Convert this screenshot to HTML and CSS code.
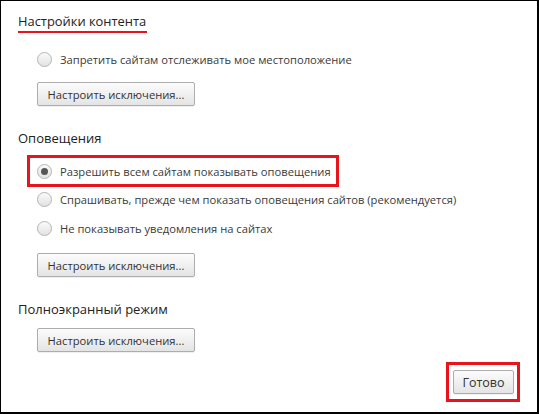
FILE: index.html
```html
<!DOCTYPE html>
<html lang="ru">
<head>
<meta charset="utf-8">
<link rel="stylesheet" href="styles.css">
</head>
<body>
<div class="frame">
  <div class="page-title"><span class="underlined">Настройки контента</span></div>

  <div class="group first">
    <label class="radio-row"><span class="radio"></span><span class="label">Запретить сайтам отслеживать мое местоположение</span></label>
    <button class="btn">Настроить исключения...</button>
  </div>

  <div class="section">
    <div class="section-title">Оповещения</div>
    <div class="group">
      <div class="highlight"><label class="radio-row"><span class="radio checked"></span><span class="label">Разрешить всем сайтам показывать оповещения</span></label></div>
      <label class="radio-row"><span class="radio"></span><span class="label">Спрашивать, прежде чем показать оповещения сайтов (рекомендуется)</span></label>
      <label class="radio-row"><span class="radio"></span><span class="label">Не показывать уведомления на сайтах</span></label>
      <button class="btn after-list">Настроить исключения...</button>
    </div>
  </div>

  <div class="section">
    <div class="section-title">Полноэкранный режим</div>
    <div class="group">
      <button class="btn after-title">Настроить исключения...</button>
    </div>
  </div>

  <div class="footer">
    <div class="highlight-btn"><button class="btn done">Готово</button></div>
  </div>
</div>
</body>
</html>
```
FILE: styles.css
```css
html, body {
  margin: 0;
  padding: 0;
  background: #fff;
}
body {
  width: 539px;
  height: 414px;
  box-sizing: border-box;
  border-top: 1px solid #000;
  border-left: 1px solid #000;
  border-right: 2px solid #000;
  border-bottom: 2px solid #000;
  font-family: "Open Sans", "Noto Sans", sans-serif;
  color: #333;
  overflow: hidden;
}
.frame {
  display: flex;
  flex-direction: column;
  height: 100%;
  padding: 0 0 0 17px;
  box-sizing: border-box;
}
.page-title {
  margin-top: 11px;
  height: 21px;
  font-size: 12.9px;
  color: #222;
}
.underlined {
  display: inline-block;
  border-bottom: 2px solid #e8131b;
  padding: 0 1px 0 0;
  line-height: 19px;
}
.group {
  display: flex;
  flex-direction: column;
  align-items: flex-start;
  padding-left: 19px;
}
.group.first {
  margin-top: 12px;
}
.radio-row {
  display: flex;
  align-items: center;
  gap: 8px;
  height: 29px;
  font-size: 11.2px;
  color: #3a3a3a;
}
.radio {
  width: 15px;
  height: 15px;
  box-sizing: border-box;
  border-radius: 50%;
  border: 1px solid #b4b4b4;
  background: linear-gradient(#fafafa, #e2e2e2);
  display: flex;
  align-items: center;
  justify-content: center;
  flex: none;
}
.radio.checked::after {
  content: "";
  width: 7px;
  height: 7px;
  border-radius: 50%;
  background: #555;
}
.btn {
  font-family: inherit;
  font-size: 11.2px;
  color: #333;
  height: 24px;
  padding: 0;
  white-space: nowrap;
  border: 1px solid #adadad;
  border-radius: 2px;
  background: linear-gradient(#fcfcfc, #e4e4e4);
  box-shadow: 0 1px 0 rgba(0,0,0,0.06);
  margin-top: 8px;
  width: 158px;
}
.btn.after-list {
  margin-top: 10px;
}
.btn.after-title {
  margin-top: 9px;
}
.section {
  margin-top: 22px;
}
.section-title {
  font-size: 13px;
  line-height: 20px;
  height: 20px;
  color: #222;
}
.highlight {
  margin-left: -10px;
  margin-top: 7px;
  margin-bottom: -2px;
  border: 3px solid #e8131b;
  padding: 0 5px 0 7px;
  height: 32px;
  box-sizing: border-box;
  display: flex;
  align-items: center;
}
.footer {
  margin-top: auto;
  display: flex;
  justify-content: flex-end;
  padding: 0 17px 10px 0;
}
.highlight-btn {
  border: 3px solid #e8131b;
  padding: 5px 3px 5px 4px;
  display: flex;
}
.btn.done {
  margin-top: 0;
  width: 61px;
  height: 24px;
  font-size: 12.5px;
}
```
